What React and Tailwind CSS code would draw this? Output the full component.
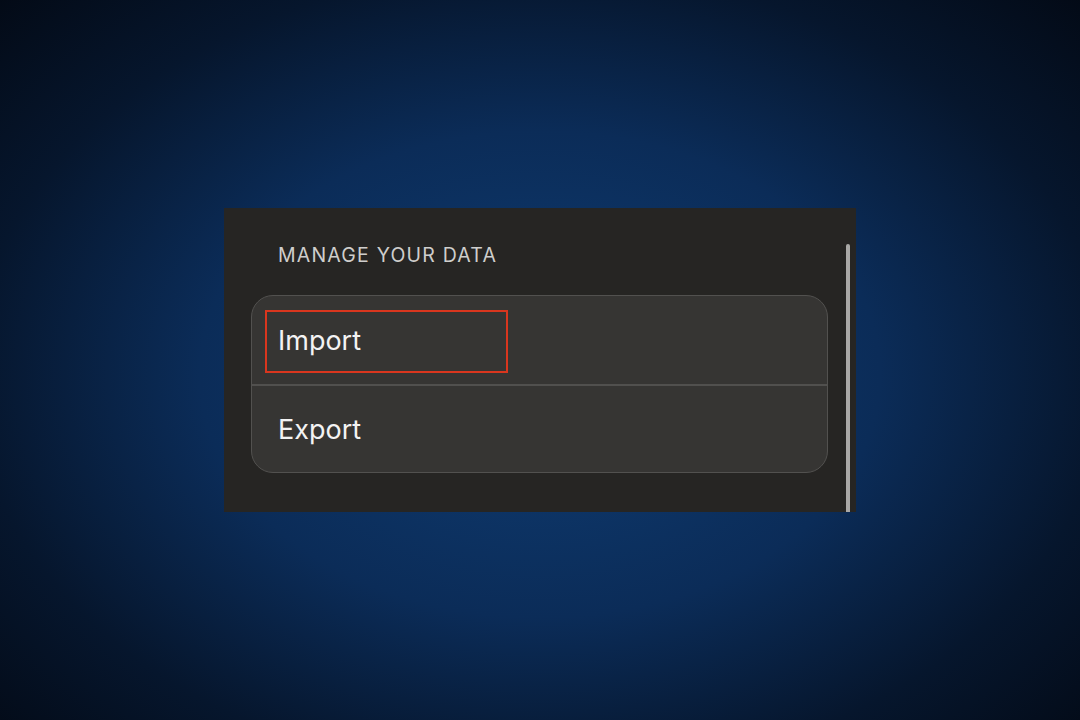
export default function App() {
  const rows = [
    { id: 'import', label: 'Import', highlighted: true },
    { id: 'export', label: 'Export', highlighted: false }
  ]

  return (
    <div
      className="w-[1080px] h-[720px] flex items-center justify-center bg-[radial-gradient(ellipse_70%_75%_at_50%_52%,#0f3d74_0%,#0b2c58_45%,#06162d_75%,#030a16_100%)]"
      style={{ fontFamily: 'Inter, "Noto Sans", sans-serif' }}
    >
      {/* Settings panel */}
      <div className="relative w-[632px] h-[304px] bg-[#262523] pt-[35px] pl-[27px] pr-[28px]">
        <h2 className="pl-[27px] text-[19.5px] leading-6 text-[#cfcecc] tracking-[1.2px]">
          MANAGE YOUR DATA
        </h2>

        <div className="mt-[28px] rounded-[22px] border border-[#52514f] bg-[#363533] overflow-hidden">
          {rows.map((row, i) => (
            <div
              key={row.id}
              className={
                i > 0
                  ? 'h-[88px] flex items-center border-t-2 border-[#51504e] px-[13px] pt-[3px]'
                  : 'h-[88px] flex items-center px-[13px] pt-[2px]'
              }
            >
              {row.highlighted ? (
                <div className="w-[243px] h-[63px] border-2 border-[#d9361e] flex items-center pl-[11px]">
                  <span className="text-[27px] text-[#f3f3f3]">{row.label}</span>
                </div>
              ) : (
                <span className="pl-[13px] text-[27px] text-[#f3f3f3]">{row.label}</span>
              )}
            </div>
          ))}
        </div>

        {/* Scrollbar */}
        <div className="absolute right-[6px] top-[36px] bottom-0 w-[4px] rounded-t-full bg-[#a9a8a6]" />
      </div>
    </div>
  )
}
